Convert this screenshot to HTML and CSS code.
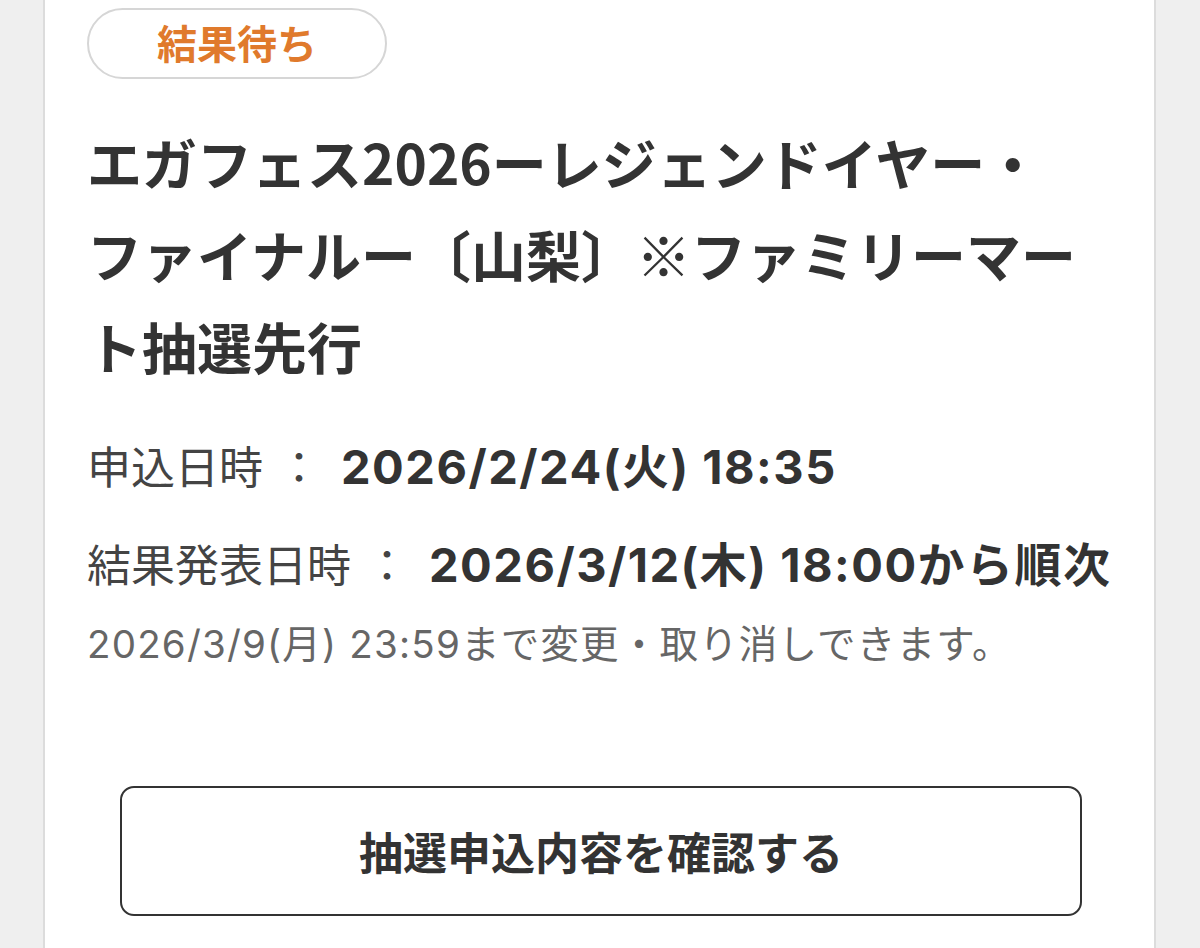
FILE: index.html
```html
<!DOCTYPE html>
<html lang="ja">
<head>
<meta charset="utf-8">
<link rel="stylesheet" href="styles.css">
</head>
<body>
<div class="page">
  <div class="card">
    <div class="badge">結果待ち</div>
    <h1 class="title">エガフェス2026ーレジェンドイヤー・ファイナルー〔山梨〕※ファミリーマート抽選先行</h1>
    <div class="row">
      <span class="label">申込日時</span><span class="colon">：</span><span class="value">2026/2/24(火) 18:35</span>
    </div>
    <div class="row row2">
      <span class="label">結果発表日時</span><span class="colon">：</span><span class="value">2026/3/12(木) 18:00から順次</span>
    </div>
    <p class="note">2026/3/9(月) 23:59まで変更・取り消しできます。</p>
    <div class="btn">抽選申込内容を確認する</div>
  </div>
</div>
</body>
</html>
```
FILE: styles.css
```css
html, body {
  margin: 0;
  padding: 0;
}
body {
  background: #efefef;
  font-family: "Noto Sans CJK JP", "Noto Sans", sans-serif;
  color: #333;
}
.page {
  margin-left: 43px;
  width: 1109px;
  min-height: 948px;
  background: #fff;
  border-left: 2px solid #dcdcdc;
  border-right: 2px solid #dcdcdc;
}
.card {
  padding: 8px 44px 0 42px;
}
.badge {
  box-sizing: border-box;
  width: 300px;
  height: 71px;
  border: 2px solid #d6d6d6;
  border-radius: 36px;
  display: flex;
  align-items: center;
  justify-content: center;
  color: #e07a2c;
  font-weight: 700;
  font-size: 40px;
  line-height: 1;
  padding-bottom: 4px;
}
.title {
  margin: 36px 0 0;
  max-width: 1000px;
  font-size: 55px;
  line-height: 92px;
  font-weight: 700;
  color: #333;
}
.row {
  margin-top: 44px;
  display: flex;
  align-items: baseline;
  font-size: 44px;
  line-height: 60px;
  white-space: nowrap;
}
.row2 {
  margin-top: 36px;
}
.label {
  font-weight: 400;
  color: #444;
}
.colon {
  color: #444;
  margin: 0 20px 0 14px;
}
.value {
  font-family: "Inter", "Noto Sans CJK JP", sans-serif;
  font-weight: 700;
  font-size: 47px;
  letter-spacing: 1.5px;
  color: #333;
}
.note {
  margin: 24px 0 0;
  font-family: "Inter", "Noto Sans CJK JP", sans-serif;
  font-size: 38.5px;
  letter-spacing: 1.2px;
  line-height: 50px;
  color: #666;
  white-space: nowrap;
}
.btn {
  box-sizing: border-box;
  margin: 117px 28px 0 33px;
  height: 130px;
  border: 2.5px solid #333;
  border-radius: 14px;
  display: flex;
  align-items: center;
  justify-content: center;
  font-size: 44px;
  font-weight: 700;
  color: #333;
}
```
